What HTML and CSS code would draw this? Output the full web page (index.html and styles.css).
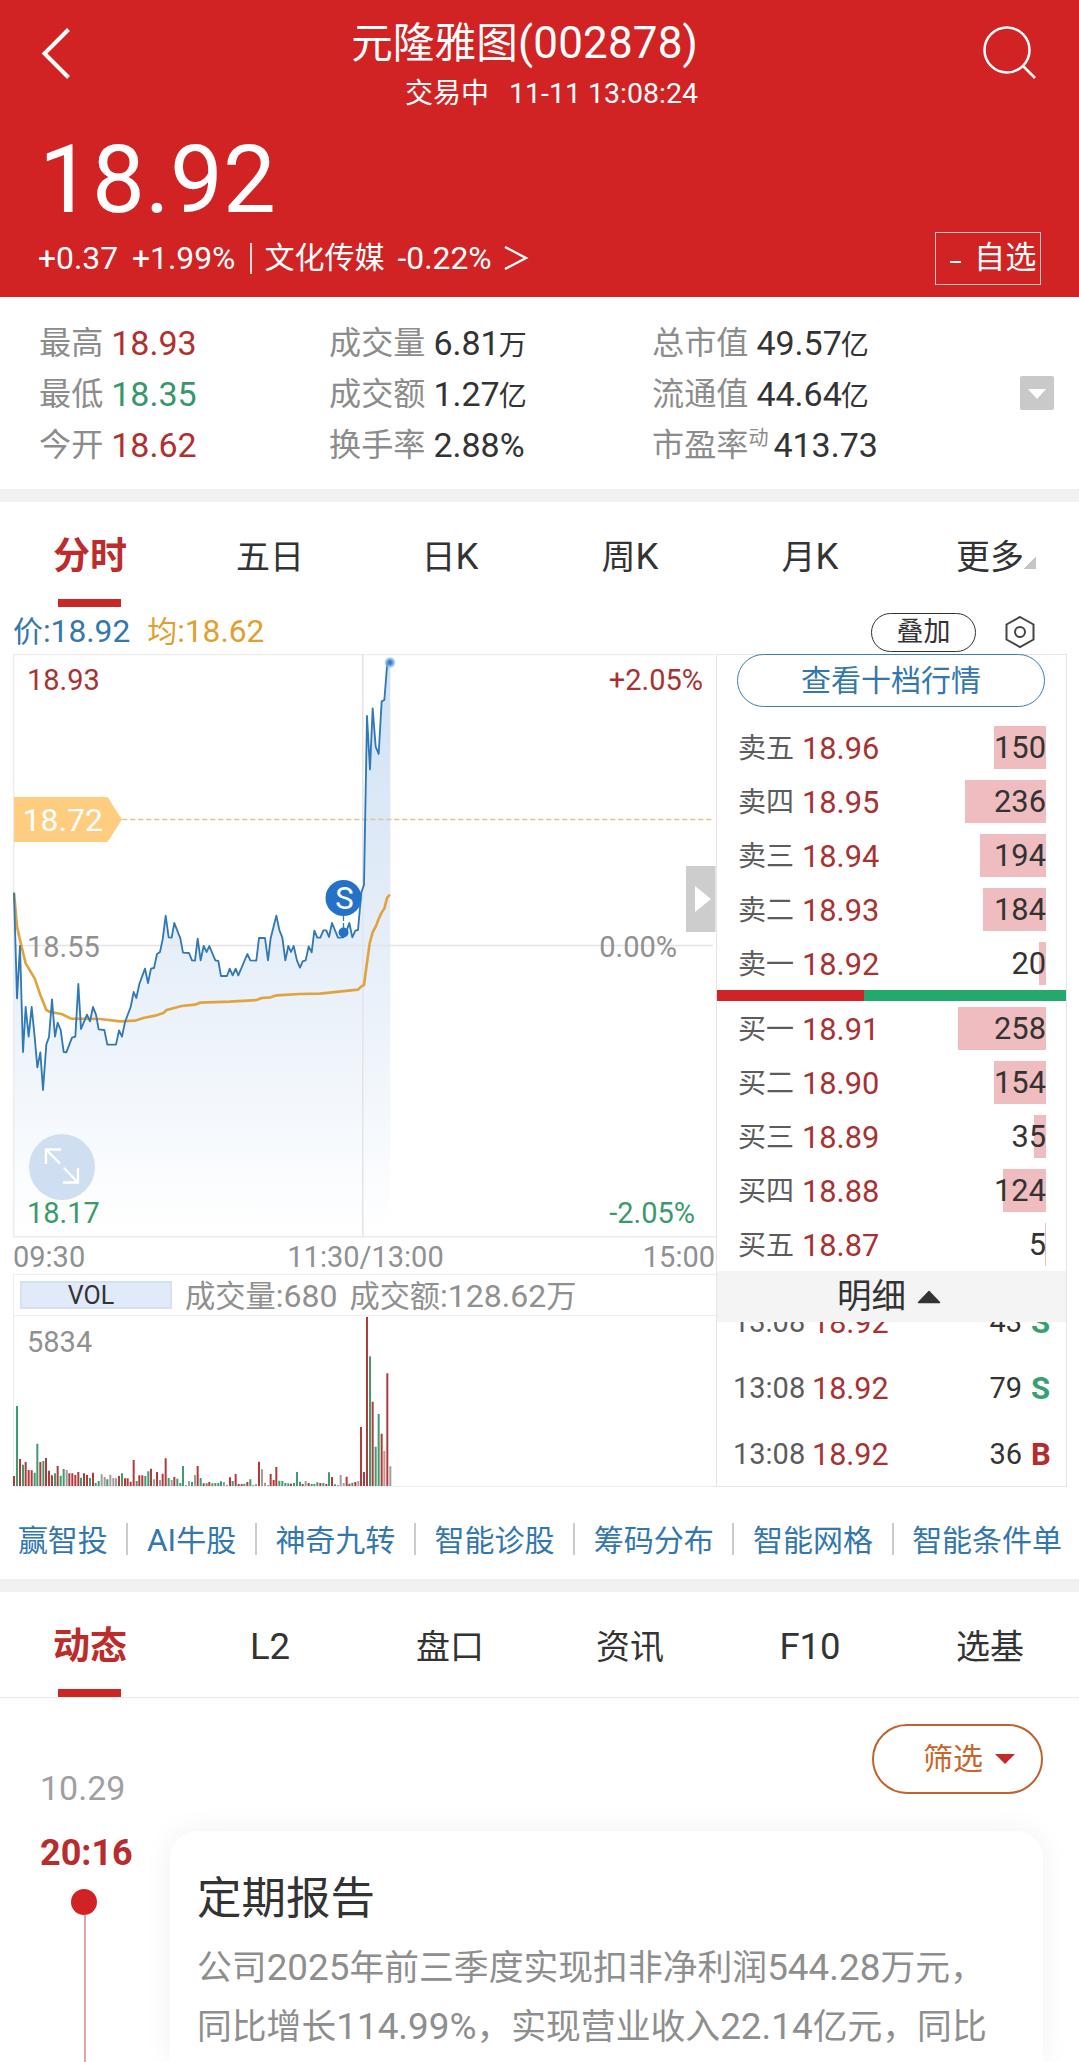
FILE: index.html
```html
<!DOCTYPE html>
<html lang="zh-CN">
<head>
<meta charset="utf-8">
<title>元隆雅图(002878)</title>
<link rel="stylesheet" href="styles.css">
</head>
<body>
<header class="header">
  <nav class="nav">
    <svg class="back" width="32" height="54" viewBox="0 0 32 54"><path d="M28.500 3.500 4.500 27.500l24 24" fill="none" stroke="#fff" stroke-width="4"/></svg>
    <div class="titles">
      <h1 class="title"><span class="zh">元隆雅图</span>(002878)</h1>
      <p class="status"><span class="zh">交易中</span><span class="clock">11-11 13:08:24</span></p>
    </div>
    <svg class="search" width="56" height="56" viewBox="0 0 56 56" fill="none" stroke="#fff" stroke-width="2.500"><circle cx="25" cy="25" r="22.500"/><path d="M41 41 53 53"/></svg>
  </nav>
  <div class="price">18.92</div>
  <div class="change">
    <span>+0.37</span><span class="pct">+1.99%</span><i class="bar"></i><span class="zh">文化传媒</span><span class="sector">-0.22%</span>
    <svg width="26" height="26" viewBox="0 0 26 26"><path d="M2 2 23 13 2 24" fill="none" stroke="#fff" stroke-width="2.300"/></svg>
    <button class="watch"><i></i><span class="zh">自选</span></button>
  </div>
</header>

<section class="stats">
  <div class="stat"><span class="zh k">最高</span><b class="up">18.93</b></div>
  <div class="stat"><span class="zh k">成交量</span><b>6.81<span class="unit">万</span></b></div>
  <div class="stat"><span class="zh k">总市值</span><b>49.57<span class="unit">亿</span></b></div>
  <div class="stat"><span class="zh k">最低</span><b class="down">18.35</b></div>
  <div class="stat"><span class="zh k">成交额</span><b>1.27<span class="unit">亿</span></b></div>
  <div class="stat"><span class="zh k">流通值</span><b>44.64<span class="unit">亿</span></b>
    <svg class="toggle" width="34" height="34" viewBox="0 0 34 34"><rect width="34" height="34" rx="2" fill="#c9c9c9"/><path d="M8 13h18l-9 10z" fill="#fff"/></svg></div>
  <div class="stat"><span class="zh k">今开</span><b class="up">18.62</b></div>
  <div class="stat"><span class="zh k">换手率</span><b>2.88%</b></div>
  <div class="stat"><span class="zh k">市盈率</span><span class="dyn">动</span><b>413.73</b></div>
</section>

<div class="divider"></div>

<nav class="tabs">
  <a class="tab on">分时</a><a class="tab">五日</a><a class="tab">日<em>K</em></a><a class="tab">周<em>K</em></a><a class="tab">月<em>K</em></a><a class="tab more">更多<i></i></a>
</nav>

<div class="legend">
  <span class="now"><span class="zh">价</span>:18.92</span>
  <span class="avg"><span class="zh">均</span>:18.62</span>
  <button class="overlay">叠加</button>
  <svg width="32" height="34" viewBox="0 0 32 34" fill="none" stroke="#444" stroke-width="2"><path d="M16 2 29.500 9.500v15L16 32 2.500 24.500v-15z"/><circle cx="16" cy="17" r="5"/></svg>
</div>

<main class="market">
  <div class="charts">
    <svg class="minute" width="703" height="584" viewBox="13 654 703 584">
      <defs>
        <linearGradient id="area" gradientUnits="userSpaceOnUse" x1="0" y1="-652" x2="0" y2="1050">
          <stop offset="0" stop-color="#cfe2f5"/><stop offset=".45" stop-color="#e4edf8"/><stop offset=".62" stop-color="#ebf2fa"/><stop offset="1" stop-color="#fff"/>
        </linearGradient>
        <radialGradient id="glow"><stop offset="0" stop-color="#2472c8"/><stop offset=".4" stop-color="#4a8ed6"/><stop offset="1" stop-color="#a5ccf2" stop-opacity=".5"/></radialGradient>
      </defs>
      <g transform="translate(0 880) scale(.33333)" stroke-linejoin="round">
        <path fill="url(#area)" d="M42 38 51 355 60 198 69 516 77 381 86 470 95 381 104 470 112 562 121 517 129 630 139 493 147 471 156 358 165 470 173 428 182 450 191 516 199 517 216 473 226 470 235 312 243 447 261 404 270 424 279 381 288 404 296 448 313 450 322 494 348 494 357 451 366 470 375 426 392 381 401 336 409 354 418 312 435 266 444 309 453 266 462 264 471 222 480 216 488 178 497 107 506 172 515 173 523 129 541 175 549 218 567 219 576 241 585 242 593 176 602 241 611 198 620 216 628 198 646 241 655 243 663 288 681 288 689 266 698 286 707 266 715 286 742 222 751 241 769 242 777 174 795 174 804 241 812 175 829 107 838 150 847 173 856 241 865 198 873 216 881 198 891 242 900 263 908 244 917 241 926 199 935 217 943 152 952 173 961 173 970 151 979 151 987 171 996 129 1014 173 1030 172 1040 152 1048 129 1057 172 1066 152 1074 150 1084 37 1092 15 1101 -492 1110 -332 1118 -515 1127 -400 1136 -378 1145 -536 1153 -540 1162 -652 1171 -652V1068H42z"/>
      </g>
      <g stroke="#ececee" stroke-width="1.500" fill="none">
        <path d="M13.700 1238V654.500H715"/><path d="M13 1236.700H716"/><path d="M362.800 654V1237M14 945.500H713" stroke="#e2e4e8"/>
      </g>
      <path d="M122 819.500H714" stroke="#e4c596" stroke-width="1.300" stroke-dasharray="5.500 2.500"/>
      <g class="axis">
        <text x="27" y="690" fill="#a83232">18.93</text>
        <text x="703" y="690" text-anchor="end" fill="#a83232">+2.05%</text>
        <text x="27" y="956.700">18.55</text>
        <text x="677" y="956.700" text-anchor="end">0.00%</text>
        <text x="27" y="1222.700" fill="#3a9a6a">18.17</text>
        <text x="695" y="1222.700" text-anchor="end" fill="#3a9a6a">-2.05%</text>
      </g>
      <g transform="translate(0 880) scale(.33333)" fill="none" stroke-linejoin="round">
        <path stroke="#e0a43e" stroke-width="8" d="M42 38 51 140 60 180 77 250 104 295 121 345 139 390 150 396 185 402 213 416 300 417 360 424 405 422 430 414 465 407 490 399 500 390 545 378 585 374 600 368 690 365 770 360 785 354 812 352 830 346 900 342 960 341 1074 329 1084 319 1092 315 1100 255 1109 190 1118 157 1127 140 1136 117 1145 98 1153 85 1162 52 1170 44"/>
        <path stroke="#3078b6" stroke-width="5.500" d="M42 38 51 355 60 198 69 516 77 381 86 470 95 381 104 470 112 562 121 517 129 630 139 493 147 471 156 358 165 470 173 428 182 450 191 516 199 517 216 473 226 470 235 312 243 447 261 404 270 424 279 381 288 404 296 448 313 450 322 494 348 494 357 451 366 470 375 426 392 381 401 336 409 354 418 312 435 266 444 309 453 266 462 264 471 222 480 216 488 178 497 107 506 172 515 173 523 129 541 175 549 218 567 219 576 241 585 242 593 176 602 241 611 198 620 216 628 198 646 241 655 243 663 288 681 288 689 266 698 286 707 266 715 286 742 222 751 241 769 242 777 174 795 174 804 241 812 175 829 107 838 150 847 173 856 241 865 198 873 216 881 198 891 242 900 263 908 244 917 241 926 199 935 217 943 152 952 173 961 173 970 151 979 151 987 171 996 129 1014 173 1030 172 1040 152 1048 129 1057 172 1066 152 1074 150 1084 37 1092 15 1101 -492 1110 -332 1118 -515 1127 -400 1136 -378 1145 -536 1153 -540 1162 -652 1171 -652"/>
      </g>
      <circle cx="390" cy="662.500" r="5.500" fill="url(#glow)"/>
      <path d="M14 797h93.500L122 819.500 107.500 842H14z" fill="#ffcd80"/>
      <text class="level" x="22.500" y="831">18.72</text>
      <circle cx="343.500" cy="898" r="18" fill="#2472c8"/>
      <path d="M343.500 916v12" stroke="#3078b6" stroke-width="1.300" stroke-dasharray="5 2"/>
      <circle cx="343.500" cy="932.500" r="5" fill="#2472c8"/>
      <text class="sell" x="344.500" y="909" text-anchor="middle">S</text>
      <path d="M686 866h29.500v66H686z" fill="#cdcdcd"/><path d="m695 886 16 13-16 13z" fill="#fff"/>
      <circle cx="62" cy="1167" r="33" fill="#cfdff1"/>
      <path d="M46 1164v-14.500h15M46 1149.500 60 1163.500M78 1168v14.500H63M78 1182.500 64 1168" fill="none" stroke="#fff" stroke-width="2.300"/>
    </svg>
    <div class="times"><span>09:30</span><span>11:30/13:00</span><span>15:00</span></div>
    <div class="volhead"><span class="vol">VOL</span><span class="fig"><span class="zh">成交量</span>:680</span><span class="fig"><span class="zh">成交额</span>:128.62<span class="zh">万</span></span></div>
    <svg class="volume" width="703" height="171" viewBox="13 1316 703 171">
      <path d="M13.700 1316V1486.300H716" fill="none" stroke="#ececee"/>
      <g transform="translate(0 1230) scale(.33333)" stroke-width="6" fill="none">
        <path stroke="#b13a3a" d="M42 768v-30M60 768v-81M77 768v-72M86 768v-48M95 768v-47M121 768v-72M138 768v-84M147 768v-46M156 768v-32M173 768v-60M208 768v-38M217 768v-38M226 768v-33M235 768v-42M252 768v-38M261 768v-33M279 768v-40M357 768v-30M375 768v-23M383 768v-23M392 768v-13M401 768v-78M418 768v-32M427 768v-32M453 768v-52M471 768v-42M488 768v-37M497 768v-83M523 768v-27M593 768v-60M611 768v-8M628 768v-12M690 768v-26M707 768v-36M716 768v-6M725 768v-6M742 768v-12M777 768v-73M812 768v-36M821 768v-18M829 768v-57M873 768v-7M908 768v-6M926 768v-9M961 768v-9M979 768v-6M996 768v-27M1040 768v-28M1048 768v-7M1066 768v-12M1083 768v-177M1092 768v-42M1101 768v-507M1118 768v-253M1145 768v-157M1162 768v-338"/>
        <path stroke="#3f9c70" d="M51 768v-240M69 768v-64M104 768v-40M112 768v-127M130 768v-75M165 768v-38M182 768v-31M191 768v-51M243 768v-25M270 768v-24M287 768v-9M296 768v-15M322 768v-20M366 768v-38M410 768v-15M436 768v-30M445 768v-44M506 768v-24M532 768v-22M541 768v-9M549 768v-60M576 768v-12M602 768v-24M620 768v-8M637 768v-8M646 768v-9M655 768v-9M663 768v-14M698 768v-15M733 768v-7M751 768v-20M838 768v-16M847 768v-15M856 768v-9M865 768v-8M882 768v-9M891 768v-42M900 768v-13M935 768v-6M943 768v-6M952 768v-11M970 768v-9M987 768v-41M1005 768v-5M1057 768v-10M1110 768v-389M1127 768v-118M1136 768v-216"/>
        <path stroke="#a39c9c" d="M200 768v-48M305 768v-35M314 768v-27M331 768v-34M340 768v-24M348 768v-23M462 768v-20M480 768v-18M515 768v-18M558 768v-3M567 768v-15M585 768v-33M672 768v-12M681 768v-4M760 768v-4M768 768v-6M786 768v-50M795 768v-10M804 768v-3M917 768v-15M1014 768v-3M1022 768v-33M1031 768v-9M1075 768v-15M1171 768v-59"/>
        <path stroke="#cf9090" d="M1153 768v-105"/>
      </g>
      <text class="axis" x="27" y="1351.700">5834</text>
    </svg>
  </div>

  <aside class="book">
    <button class="ten">查看十档行情</button>
    <div class="row"><span class="side">卖五</span><span class="px">18.96</span><span class="qty"><i style="width:52px"></i><b>150</b></span></div>
    <div class="row"><span class="side">卖四</span><span class="px">18.95</span><span class="qty"><i style="width:81px"></i><b>236</b></span></div>
    <div class="row"><span class="side">卖三</span><span class="px">18.94</span><span class="qty"><i style="width:66px"></i><b>194</b></span></div>
    <div class="row"><span class="side">卖二</span><span class="px">18.93</span><span class="qty"><i style="width:63px"></i><b>184</b></span></div>
    <div class="row"><span class="side">卖一</span><span class="px">18.92</span><span class="qty"><i style="width:7px"></i><b>20</b></span></div>
    <div class="ratio"><i style="width:42%"></i></div>
    <div class="row"><span class="side">买一</span><span class="px">18.91</span><span class="qty"><i style="width:88px"></i><b>258</b></span></div>
    <div class="row"><span class="side">买二</span><span class="px">18.90</span><span class="qty"><i style="width:52px"></i><b>154</b></span></div>
    <div class="row"><span class="side">买三</span><span class="px">18.89</span><span class="qty"><i style="width:12px"></i><b>35</b></span></div>
    <div class="row"><span class="side">买四</span><span class="px">18.88</span><span class="qty"><i style="width:43px"></i><b>124</b></span></div>
    <div class="row"><span class="side">买五</span><span class="px">18.87</span><span class="qty"><i style="width:1px"></i><b>5</b></span></div>
    <div class="detail">明细<svg width="24" height="14" viewBox="0 0 24 14"><path d="M12 1.500 22.500 12.500h-21z" fill="#333" stroke="#333" stroke-width="1.500" stroke-linejoin="round"/></svg></div>
    <div class="ticks">
      <div class="tick"><span class="t">13:08</span><span class="px">18.92</span><span class="n">43</span><b class="s">S</b></div>
      <div class="tick"><span class="t">13:08</span><span class="px">18.92</span><span class="n">79</span><b class="s">S</b></div>
      <div class="tick"><span class="t">13:08</span><span class="px">18.92</span><span class="n">36</span><b class="b">B</b></div>
    </div>
  </aside>
</main>

<nav class="links">
  <a>赢智投</a><i></i><a><em>AI</em>牛股</a><i></i><a>神奇九转</a><i></i><a>智能诊股</a><i></i><a>筹码分布</a><i></i><a>智能网格</a><i></i><a>智能条件单</a>
</nav>

<div class="divider"></div>

<nav class="tabs line">
  <a class="tab on">动态</a><a class="tab"><em>L2</em></a><a class="tab">盘口</a><a class="tab">资讯</a><a class="tab"><em>F10</em></a><a class="tab">选基</a>
</nav>

<section class="feed">
  <div class="timeline">
    <div class="date">10.29</div>
    <div class="time">20:16</div>
    <div class="dot"></div>
    <div class="stem"></div>
  </div>
  <div class="events">
    <button class="filter">筛选<svg width="20" height="10" viewBox="0 0 20 10"><path d="M0 0h20L10 10z" fill="#c62828"/></svg></button>
    <article class="card">
      <h2>定期报告</h2>
      <p><span class="zh">公司</span>2025<span class="zh">年前三季度实现扣非净利润</span>544.28<span class="zh">万元，</span><br><span class="zh">同比增长</span>114.99%<span class="zh">，实现营业收入</span>22.14<span class="zh">亿元，同比</span></p>
    </article>
  </div>
</section>
</body>
</html>
```
FILE: styles.css
```css
* { box-sizing: border-box; margin: 0; padding: 0; }
html, body { height: 2062px; overflow: hidden; }
body { width: 1079px; background: #fff; color: #333; font-family: Roboto, "Noto Sans CJK SC", sans-serif; }
i, em { font-style: normal; }
b, h1, h2 { font-weight: 400; }
svg { display: block; flex: none; }
button { background: none; font-family: inherit; white-space: nowrap; }
a, span { white-space: nowrap; }
.zh { font-size: .945em; }

.header { height: 297px; background: #d12324; color: #fff; }
.nav { display: flex; height: 114px; padding: 0 41px 0 40px; }
.back { margin-top: 26px; }
.titles { margin: 13px 0 0 auto; text-align: right; }
.title { font-size: 44px; line-height: 60px; letter-spacing: .15px; }
.status { font-size: 28.500px; line-height: 40px; }
.status .zh { font-size: 28px; }
.clock { margin-left: 20px; }
.search { margin: 25px 0 0 284px; }
.price { margin: 19px 0 0 39px; font-size: 94px; line-height: 94px; letter-spacing: .2px; }
.change { display: flex; align-items: center; height: 54px; margin-top: 4px; padding: 0 38px; font-size: 31.800px; line-height: 54px; }
.pct { margin-left: 14px; }
.bar { width: 2px; height: 31px; margin: 0 12px 0 15px; background: #fff; opacity: .85; }
.sector { margin: 0 11px 0 13px; }
.watch { display: flex; align-items: center; width: 106px; height: 53px; margin-left: auto; padding-left: 14px; border: 1.500px solid #f3c4c4; color: #fff; font-size: 33px; line-height: 50px; }
.watch i { width: 11px; height: 2px; margin: 8px 13px 0 0; background: #fff; }

.stats { display: grid; grid-template-columns: 290px 323px 1fr; grid-auto-rows: 51px; height: 192px; padding: 21px 25px 0 39px; font-size: 34px; line-height: 51px; }
.stat { display: flex; }
.stat b { margin-left: 8px; }
.unit { margin-left: -1px; font-size: 28px; }
.k { color: #8c8c8c; }
.up { color: #b03030; }
.down { color: #36986a; }
.toggle { margin: 7px 0 0 auto; }
.dyn { color: #8c8c8c; font-size: 20px; line-height: 36px; }
.dyn + b { margin-left: 5px; }

.divider { height: 13px; background: #f1f1f1; }
.tabs { display: grid; grid-template-columns: repeat(6, 180px); height: 105px; }
.tabs.line { height: 106px; border-bottom: 1px solid #e9e9e9; }
.tab { height: 105px; font-size: 34px; line-height: 110px; text-align: center; }
.tab em { font-size: 36.500px; }
.tab.on { font-size: 37px; font-weight: 700; color: #bd2b2b; background: linear-gradient(#ca2626, #ca2626) 58px 100% / 63px 8px no-repeat; }
.more i { display: inline-block; width: 12px; height: 12px; margin-right: -12px; background: linear-gradient(135deg, transparent 50%, #c6c6c6 50%); }

.legend { display: flex; align-items: center; height: 47px; padding: 3px 43px 0 13px; font-size: 31.700px; line-height: 44px; }
.now { color: #3477ad; }
.avg { margin-left: 17px; color: #e0a030; }
.overlay { width: 105px; height: 39px; margin: 0 28px 0 auto; border: 1.500px solid #333; border-radius: 20px; color: #333; font-size: 27px; line-height: 36px; }

.market { display: grid; grid-template-columns: 703px 351px; height: 833px; padding-left: 13px; }
.axis { font-size: 29px; fill: #909090; }
.level { font-size: 32px; fill: #fff; }
.sell { font-size: 31px; fill: #fff; }
.times { display: flex; justify-content: space-between; height: 36px; padding-right: 1px; color: #909090; font-size: 29px; line-height: 38px; }
.times span:nth-child(2) { margin: 0 7px 0 10px; }
.volhead { display: flex; align-items: center; height: 42px; padding-left: 6px; border: solid #eee; border-width: 1.500px 0 1.500px 1px; color: #909090; font-size: 32px; line-height: 39px; }
.vol { width: 152px; height: 28px; margin-right: 1px; padding-right: 10px; border: 2px solid #d5e1f2; background: #e0eaf8; color: #333; font-size: 25px; line-height: 25px; text-align: center; }
.fig { margin: 2px 0 0 12px; }

.book { display: flex; flex-direction: column; height: 833px; border: 1px solid #e4e4e6; }
.ten { flex: none; width: 308px; height: 53px; margin: -1px 0 13px 20px; border: 1.500px solid #3f7dae; border-radius: 27px; color: #3477ad; font-size: 30px; line-height: 50px; }
.row { flex: none; display: flex; align-items: center; height: 54px; padding: 0 20px 0 21px; font-size: 30.800px; line-height: 54px; }
.side { width: 64px; padding-top: 3px; color: #5c5c5c; font-size: 28px; }
.px { padding-top: 3px; color: #a83232; }
.qty { display: grid; justify-items: end; align-items: center; margin-left: auto; color: #333; }
.qty i { grid-area: 1 / 1; height: 43px; background: #efbdc0; }
.qty b { grid-area: 1 / 1; height: 54px; line-height: 55px; }
.ratio { flex: none; height: 11px; background: #24a86c; }
.ratio i { display: block; height: 11px; background: #cf2426; }
.detail { flex: none; display: flex; align-items: center; height: 51px; padding-left: 120px; background: #f4f4f4; font-size: 34.500px; line-height: 51px; }
.detail svg { margin-left: 11px; }
.ticks { display: flex; flex-direction: column; justify-content: flex-end; flex: 1; min-height: 0; overflow: hidden; }
.tick { flex: none; display: flex; height: 66px; padding: 0 15px 0 16px; font-size: 29px; line-height: 69px; }
.tick .px { margin-left: 8px; padding: 0; font-size: 30.500px; }
.t { width: 71px; color: #5c5c5c; }
.n { margin-left: auto; }
.tick b { width: 20px; margin-left: 9px; font-weight: 700; font-size: 31px; }
.s { color: #36a070; }
.b { color: #b52c2c; }

.links { display: flex; justify-content: center; align-items: center; gap: 18.600px; height: 92px; padding: 16px 0 0 1px; color: #3477ad; font-size: 30px; line-height: 60px; }
.links i { flex: none; width: 2px; height: 32px; margin-top: -5px; background: #ccc; }
.links em { font-size: 31.500px; }

.feed { display: flex; height: 364px; }
.timeline { display: flex; flex-direction: column; width: 170px; padding: 65px 0 0 40px; }
.date { color: #a0a0a0; font-size: 34px; line-height: 50px; }
.time { margin-top: 15px; color: #b82c2c; font-size: 36px; font-weight: 700; line-height: 50px; }
.dot { flex: none; width: 26px; height: 26px; margin: 11px 0 0 31px; border-radius: 50%; background: #d12324; }
.stem { flex: 1; width: 2px; margin-left: 44px; background: #dca6a6; }
.events { display: flex; flex-direction: column; width: 873px; padding-top: 26px; }
.filter { display: flex; align-items: center; align-self: flex-end; flex: none; width: 171px; height: 70px; padding-left: 49px; border: 2px solid #c0622f; border-radius: 35px; color: #c8652c; font-size: 30px; line-height: 60px; }
.filter svg { margin-left: 12px; }
.card { flex: 1; margin-top: 37px; padding: 31px 27px 0; border-radius: 27px 27px 0 0; background: #fff; box-shadow: 0 0 30px rgba(0, 0, 0, .06); }
.card h2 { font-size: 44.500px; line-height: 74px; }
.card p { margin-top: 3px; color: #8e8e8e; font-size: 36.850px; line-height: 58px; white-space: nowrap; }
```
